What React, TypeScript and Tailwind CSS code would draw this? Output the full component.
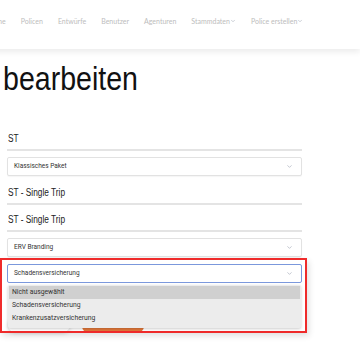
import { ChevronDown } from 'lucide-react';

const navItems = ['Home', 'Policen', 'Entwürfe', 'Benutzer', 'Agenturen'];

function Chev({ size = 7 }: { size?: number }) {
  return <ChevronDown size={size} strokeWidth={2} className="text-gray-400" />;
}

function Select({ label }: { label: string }) {
  return (
    <div className="h-[19px] border border-[#e2e2e2] rounded-[2px] bg-white flex items-center justify-between pl-[6px] pr-[8px] shadow-[0_1px_1px_rgba(0,0,0,0.04)]">
      <span className="text-[6.5px] text-[#333]">{label}</span>
      <Chev />
    </div>
  );
}

// narrow look: Liberation Sans squeezed like Arial Narrow
function TextField({ value }: { value: string }) {
  return (
    <div className="border-b-2 border-[#e4e4e4] pb-[4px] pl-[1px] text-[10px] text-[#222] leading-[12px] font-['Liberation_Sans',sans-serif]">
      <span className="inline-block origin-left scale-x-[0.83]">{value}</span>
    </div>
  );
}

export default function App() {
  return (
    <main className="w-[360px] h-[360px] bg-white overflow-hidden relative font-['Roboto',sans-serif]">
      {/* Navigation */}
      <nav className="h-[49px] bg-white shadow-[0_3px_6px_rgba(0,0,0,0.08)] flex items-start pt-[16px] gap-[15px] -ml-[13px] font-['Lato',sans-serif] text-[7px] text-[#bdbdbd] relative z-10">
        {navItems.map((n) => (
          <span key={n}>{n}</span>
        ))}
        <span className="flex items-center">Stammdaten<Chev size={6} /></span>
        <span className="flex items-center">Police erstellen<Chev size={6} /></span>
      </nav>

      <h1 className="text-[34px] leading-none text-[#111] mt-[12px] ml-[3px] font-['Liberation_Sans',sans-serif]">
        <span className="inline-block origin-left scale-x-[0.84]">bearbeiten</span>
      </h1>

      <div className="w-[295px] ml-[7px] mt-[38px] flex flex-col">
        <TextField value="ST" />
        <div className="mt-[6px]">
          <Select label="Klassisches Paket" />
        </div>
        <div className="mt-[11px]">
          <TextField value="ST - Single Trip" />
        </div>
        <div className="mt-[9px]">
          <TextField value="ST - Single Trip" />
        </div>
        <div className="mt-[6px]">
          <Select label="ERV Branding" />
        </div>
      </div>

      {/* Buttons behind the open dropdown */}
      <div className="absolute left-[8px] top-[319px] flex gap-[12px]">
        <div className="w-[62px] h-[13px] rounded-full bg-white shadow-[0_1px_4px_rgba(0,0,0,0.18)]" />
        <div className="w-[62px] h-[14px] rounded-full bg-[#e0773a]" />
      </div>

      {/* Highlighted open select, red frame */}
      <div className="absolute left-0 top-[258px] w-[307px] h-[75px] border-2 border-solid border-[#ef2b2b] pt-[4px] shadow-[2px_3px_6px_rgba(0,0,0,0.12)]">
        <div className="ml-[5px] w-[295px] h-[19px] border border-[#7b98dc] rounded-[2px] bg-white flex items-center justify-between pl-[6px] pr-[8px]">
          <span className="text-[6.5px] text-[#333]">Schadensversicherung</span>
          <Chev />
        </div>
        <div className="ml-[6px] mt-[2px] w-[293px] bg-[#ececec] rounded-[2px] shadow-[0_1px_3px_rgba(0,0,0,0.2)] pt-[1px] pb-[3px] text-[6.8px] text-[#333]">
          <div className="bg-[#d0d0d0] mx-[1px] h-[13px] leading-[13px] pl-[3px]">Nicht ausgewählt</div>
          <div className="h-[13px] leading-[13px] pl-[4px]">Schadensversicherung</div>
          <div className="h-[13px] leading-[13px] pl-[4px]">Krankenzusatzversicherung</div>
        </div>
      </div>
    </main>
  );
}
